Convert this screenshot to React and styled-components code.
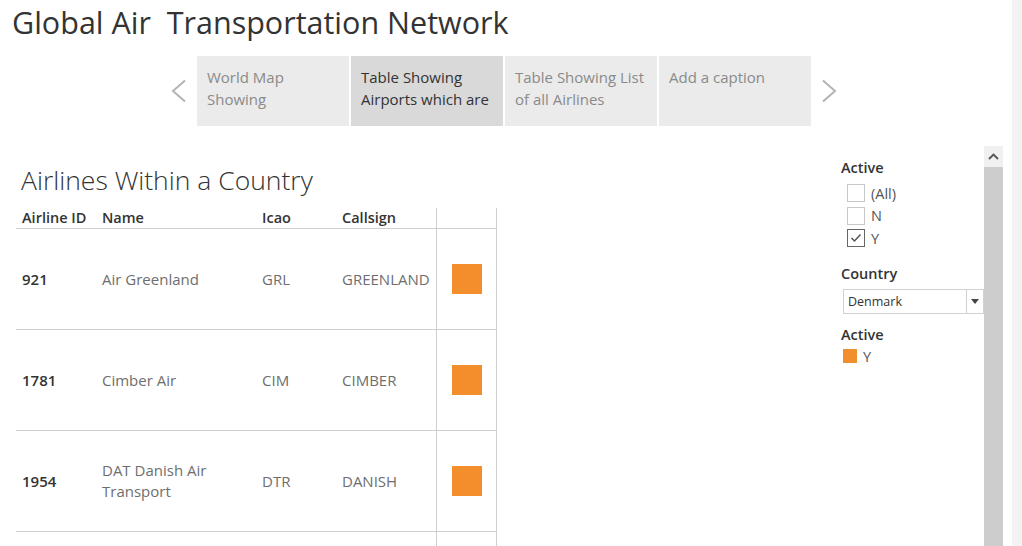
import React from 'react';
import styled, { createGlobalStyle } from 'styled-components';

const Global = createGlobalStyle`
  html, body {
    margin: 0;
    padding: 0;
    background: #fff;
    overflow: hidden;
    height: 546px;
  }
  body {
    font-family: "Open Sans", Lato, sans-serif;
    color: #333;
  }
`;

const Page = styled.div`
  display: flex;
  height: 546px;
  overflow: hidden;
`;

const Main = styled.div`
  flex: 1;
  display: flex;
  flex-direction: column;
  min-width: 0;
`;

const EdgeStrip = styled.div`
  width: 10px;
  background: #f3f3f3;
`;

const Title = styled.h1`
  margin: 0;
  padding: 4px 0 0 12px;
  height: 56px;
  box-sizing: border-box;
  font-size: 30.5px;
  font-weight: 400;
  line-height: 36px;
  color: #333;
  white-space: pre;
`;

const Story = styled.div`
  display: flex;
  align-items: center;
  padding-left: 171px;
  height: 70px;
`;

const Arrow = styled.div`
  width: 26px;
  display: flex;
  justify-content: ${p => (p.right ? 'flex-end' : 'flex-start')};
  color: #b3b3b3;
`;

const Points = styled.div`
  display: flex;
  gap: 2px;
  height: 70px;
`;

const Point = styled.div`
  width: 152px;
  box-sizing: border-box;
  padding: 10px 10px 0;
  background: ${p => (p.active ? '#d9d9d9' : '#ebebeb')};
  color: ${p => (p.active ? '#333' : '#8a8a8a')};
  font-size: 15px;
  line-height: 22px;
  overflow: hidden;
  white-space: nowrap;
`;

const Content = styled.div`
  flex: 1;
  display: flex;
  margin-top: 20px;
  min-height: 0;
`;

const Dashboard = styled.div`
  width: 836px;
  padding-left: 16px;
  box-sizing: border-box;
`;

const SheetTitle = styled.h2`
  margin: 0;
  padding: 19px 0 0 5px;
  height: 62px;
  box-sizing: border-box;
  font-size: 26.5px;
  font-weight: 300;
  line-height: 30px;
  color: #333;
`;

const Table = styled.div`
  display: grid;
  grid-template-columns: 80px 160px 80px 100px 61px;
  width: 481px;
`;

const HeadCell = styled.div`
  height: 20px;
  border-bottom: 1px solid #cfcfcf;
  padding-left: 6px;
  font-size: 14.5px;
  font-weight: 600;
  line-height: 20px;
  color: #333;
  white-space: nowrap;
  ${p => p.swatch && 'border-left: 1px solid #cfcfcf; border-right: 1px solid #cfcfcf;'}
`;

const Cell = styled.div`
  height: 100px;
  border-bottom: 1px solid #cfcfcf;
  padding: 0 4px 0 6px;
  display: flex;
  align-items: center;
  font-size: 15px;
  line-height: 21px;
  font-weight: ${p => (p.strong ? 600 : 400)};
  color: ${p => (p.strong ? '#333' : '#6e6e6e')};
  white-space: ${p => (p.nowrap ? 'nowrap' : 'normal')};
  ${p => p.swatch && `
    padding: 0;
    justify-content: center;
    border-left: 1px solid #cfcfcf;
    border-right: 1px solid #cfcfcf;
  `}
`;

const Swatch = styled.div`
  width: ${p => p.size}px;
  height: ${p => p.size}px;
  background: #f28e2b;
  flex: none;
`;

const Side = styled.div`
  width: 148px;
  padding: 12px 0 0 5px;
  box-sizing: border-box;
`;

const FilterTitle = styled.div`
  font-size: 14.5px;
  font-weight: 600;
  line-height: 20px;
  color: #333;
  margin-bottom: ${p => p.gap || 4}px;
`;

const CheckRow = styled.div`
  display: flex;
  align-items: center;
  gap: 6px;
  height: 22.5px;
  padding-left: 6px;
  font-size: 14.5px;
  color: #555;
`;

const Box = styled.div`
  width: 16px;
  height: 16px;
  border: 1px solid ${p => (p.checked ? '#666' : '#c8c8c8')};
  display: flex;
  align-items: center;
  justify-content: center;
`;

const Spacer = styled.div`
  height: 14px;
`;

const Dropdown = styled.div`
  display: flex;
  height: 23px;
  margin: 5px 0 11px 2px;
  border: 1px solid #d2d2d2;
  font-size: 12.5px;
  color: #333;
`;

const DropText = styled.div`
  flex: 1;
  padding-left: 4px;
  line-height: 23px;
`;

const DropButton = styled.div`
  width: 16px;
  border-left: 1px solid #d2d2d2;
  display: flex;
  align-items: center;
  justify-content: center;
`;

const Legend = styled.div`
  display: flex;
  align-items: center;
  gap: 6px;
  padding-left: 2px;
  font-size: 14.5px;
  color: #555;
`;

const Scrollbar = styled.div`
  width: 19px;
  display: flex;
  flex-direction: column;
`;

const ScrollButton = styled.div`
  height: 21px;
  background: #f0f0f0;
  display: flex;
  align-items: center;
  justify-content: center;
`;

const Thumb = styled.div`
  flex: 1;
  background: #cdcdcd;
`;

const ScrollGap = styled.div`
  width: 9px;
`;

const Chevron = ({ dir }) => (
  <svg width="15" height="24" viewBox="0 0 15 24">
    <polyline
      points={dir === 'left' ? '14,1.5 2,12 14,22.5' : '1,1.5 13,12 1,22.5'}
      fill="none"
      stroke="currentColor"
      strokeWidth="2"
    />
  </svg>
);

const rows = [
  { id: '921', name: 'Air Greenland', icao: 'GRL', call: 'GREENLAND' },
  { id: '1781', name: 'Cimber Air', icao: 'CIM', call: 'CIMBER' },
  { id: '1954', name: 'DAT Danish Air Transport', icao: 'DTR', call: 'DANISH' },
  { id: '', name: '', icao: '', call: '', empty: true },
];

const points = [
  { text: ['World Map', 'Showing'] },
  { text: ['Table Showing', 'Airports which are'], active: true },
  { text: ['Table Showing List', 'of all Airlines'] },
  { text: ['Add a caption'] },
];

export default function App() {
  return (
    <Page>
      <Global />
      <Main>
        <Title>{'Global Air  Transportation Network'}</Title>
        <Story>
          <Arrow><Chevron dir="left" /></Arrow>
          <Points>
            {points.map((p, i) => (
              <Point key={i} active={p.active}>
                {p.text.map(t => <div key={t}>{t}</div>)}
              </Point>
            ))}
          </Points>
          <Arrow right><Chevron dir="right" /></Arrow>
        </Story>
        <Content>
          <Dashboard>
            <SheetTitle>Airlines Within a Country</SheetTitle>
            <Table>
              <HeadCell>Airline ID</HeadCell>
              <HeadCell>Name</HeadCell>
              <HeadCell>Icao</HeadCell>
              <HeadCell>Callsign</HeadCell>
              <HeadCell swatch />
              {rows.map((r, i) => (
                <React.Fragment key={i}>
                  <Cell strong>{r.id}</Cell>
                  <Cell>{r.name}</Cell>
                  <Cell>{r.icao}</Cell>
                  <Cell nowrap>{r.call}</Cell>
                  <Cell swatch>{!r.empty && <Swatch size={30} />}</Cell>
                </React.Fragment>
              ))}
            </Table>
          </Dashboard>
          <Side>
            <FilterTitle>Active</FilterTitle>
            <CheckRow><Box />(All)</CheckRow>
            <CheckRow><Box />N</CheckRow>
            <CheckRow>
              <Box checked>
                <svg width="12" height="10" viewBox="0 0 12 10">
                  <polyline points="1.5,5 4.5,8 10.5,1.5" fill="none" stroke="#555" strokeWidth="1.5" />
                </svg>
              </Box>
              Y
            </CheckRow>
            <Spacer />
            <FilterTitle gap={0}>Country</FilterTitle>
            <Dropdown>
              <DropText>Denmark</DropText>
              <DropButton>
                <svg width="8" height="5" viewBox="0 0 8 5">
                  <polygon points="0,0 8,0 4,5" fill="#444" />
                </svg>
              </DropButton>
            </Dropdown>
            <FilterTitle gap={2}>Active</FilterTitle>
            <Legend><Swatch size={14} />Y</Legend>
          </Side>
          <Scrollbar>
            <ScrollButton>
              <svg width="11" height="7" viewBox="0 0 11 7">
                <polyline points="1,6 5.5,1.5 10,6" fill="none" stroke="#555" strokeWidth="1.8" />
              </svg>
            </ScrollButton>
            <Thumb />
          </Scrollbar>
          <ScrollGap />
        </Content>
      </Main>
      <EdgeStrip />
    </Page>
  );
}
